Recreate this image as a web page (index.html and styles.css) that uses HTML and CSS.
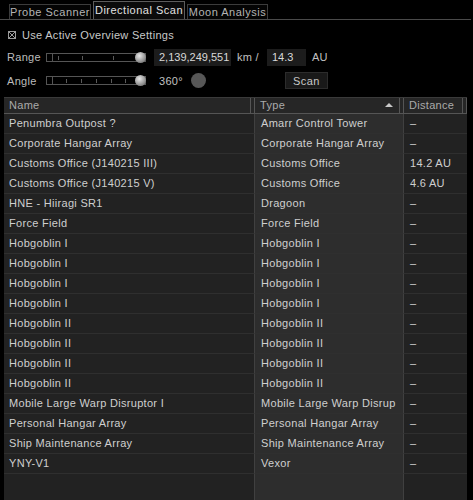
FILE: index.html
```html
<!DOCTYPE html>
<html>
<head>
<meta charset="utf-8">
<link rel="stylesheet" href="styles.css">
</head>
<body>
<div class="tabs">
  <div class="tab t1">Probe Scanner</div>
  <div class="tab active t2">Directional Scan</div>
  <div class="tab t3">Moon Analysis</div>
</div>
<div class="check-row">
  <span class="checkbox"></span>
  <span>Use Active Overview Settings</span>
</div>
<div class="ctrl-row range-row">
  <span class="lbl">Range</span>
  <div class="slider">
    <span class="seg"></span>
    <span class="tick" style="left:11px"></span>
    <span class="tick" style="left:35px"></span>
    <span class="tick" style="left:66px"></span>
    <span class="knob"></span>
  </div>
  <div class="field km">2,139,249,551</div>
  <span class="unit">km /</span>
  <div class="field au">14.3</div>
  <span class="unit">AU</span>
</div>
<div class="ctrl-row angle-row">
  <span class="lbl">Angle</span>
  <div class="slider">
    <span class="seg"></span>
    <span class="tick" style="left:19px"></span>
    <span class="tick" style="left:34px"></span>
    <span class="tick" style="left:49px"></span>
    <span class="tick" style="left:64px"></span>
    <span class="tick" style="left:78px"></span>
    <span class="knob"></span>
  </div>
  <span class="deg">360°</span>
  <span class="circle"></span>
  <button class="scan">Scan</button>
</div>
<div class="table">
  <div class="thead">
    <div class="th c-name">Name</div>
    <div class="th c-type">Type <span class="arrow"></span></div>
    <div class="th c-dist">Distance</div>
    <div class="th c-end"></div>
  </div>
  <div class="tbody">
    <div class="tr"><div class="td c-name">Penumbra Outpost ?</div><div class="td c-type">Amarr Control Tower</div><div class="td c-dist">–</div></div>
    <div class="tr"><div class="td c-name">Corporate Hangar Array</div><div class="td c-type">Corporate Hangar Array</div><div class="td c-dist">–</div></div>
    <div class="tr"><div class="td c-name">Customs Office (J140215 III)</div><div class="td c-type">Customs Office</div><div class="td c-dist">14.2 AU</div></div>
    <div class="tr"><div class="td c-name">Customs Office (J140215 V)</div><div class="td c-type">Customs Office</div><div class="td c-dist">4.6 AU</div></div>
    <div class="tr"><div class="td c-name">HNE - Hiiragi SR1</div><div class="td c-type">Dragoon</div><div class="td c-dist">–</div></div>
    <div class="tr"><div class="td c-name">Force Field</div><div class="td c-type">Force Field</div><div class="td c-dist">–</div></div>
    <div class="tr"><div class="td c-name">Hobgoblin I</div><div class="td c-type">Hobgoblin I</div><div class="td c-dist">–</div></div>
    <div class="tr"><div class="td c-name">Hobgoblin I</div><div class="td c-type">Hobgoblin I</div><div class="td c-dist">–</div></div>
    <div class="tr"><div class="td c-name">Hobgoblin I</div><div class="td c-type">Hobgoblin I</div><div class="td c-dist">–</div></div>
    <div class="tr"><div class="td c-name">Hobgoblin I</div><div class="td c-type">Hobgoblin I</div><div class="td c-dist">–</div></div>
    <div class="tr"><div class="td c-name">Hobgoblin II</div><div class="td c-type">Hobgoblin II</div><div class="td c-dist">–</div></div>
    <div class="tr"><div class="td c-name">Hobgoblin II</div><div class="td c-type">Hobgoblin II</div><div class="td c-dist">–</div></div>
    <div class="tr"><div class="td c-name">Hobgoblin II</div><div class="td c-type">Hobgoblin II</div><div class="td c-dist">–</div></div>
    <div class="tr"><div class="td c-name">Hobgoblin II</div><div class="td c-type">Hobgoblin II</div><div class="td c-dist">–</div></div>
    <div class="tr"><div class="td c-name">Mobile Large Warp Disruptor I</div><div class="td c-type">Mobile Large Warp Disrup</div><div class="td c-dist">–</div></div>
    <div class="tr"><div class="td c-name">Personal Hangar Array</div><div class="td c-type">Personal Hangar Array</div><div class="td c-dist">–</div></div>
    <div class="tr"><div class="td c-name">Ship Maintenance Array</div><div class="td c-type">Ship Maintenance Array</div><div class="td c-dist">–</div></div>
    <div class="tr"><div class="td c-name">YNY-V1</div><div class="td c-type">Vexor</div><div class="td c-dist">–</div></div>
    <div class="tr filler"><div class="td c-name"></div><div class="td c-type"></div><div class="td c-dist"></div></div>
  </div>
</div>
</body>
</html>
```

FILE: styles.css
```css
* { box-sizing: border-box; }
html, body {
  margin: 0;
  padding: 0;
  background: #000;
  width: 473px;
  height: 500px;
  overflow: hidden;
}
body {
  font-family: "Liberation Sans", Arial, sans-serif;
  font-size: 11px;
  letter-spacing: 0.3px;
  color: #c8c8c8;
}

/* tabs */
.tabs {
  display: flex;
  align-items: flex-end;
  gap: 2px;
  height: 20px;
  width: 471px;
  padding-left: 9px;
  border-bottom: 1px solid #4a4a4a;
}
.tab {
  height: 15px;
  line-height: 14px;
  border: 1px solid #3c3c3c;
  border-bottom: none;
  color: #b4b4b4;
  font-size: 11px;
  letter-spacing: 0.5px;
  white-space: nowrap;
  text-align: center;
  background: #040404;
}
.tab.active {
  height: 18px;
  line-height: 17px;
  border-color: #5c5c5c;
  color: #e0e0e0;
  background: #0b0b0b;
}
.t1 { width: 82px; }
.t2 { width: 92px; }
.t3 { width: 81px; }

/* checkbox row */
.check-row {
  display: flex;
  align-items: center;
  gap: 6px;
  height: 14px;
  margin-top: 8px;
  padding-left: 8px;
  color: #c8c8c8;
  white-space: nowrap;
}
.checkbox {
  width: 8px;
  height: 8px;
  border: 1px solid #9a9a9a;
  background:
    linear-gradient(45deg, transparent 42%, #9a9a9a 42%, #9a9a9a 58%, transparent 58%),
    linear-gradient(-45deg, transparent 42%, #9a9a9a 42%, #9a9a9a 58%, transparent 58%);
}

/* control rows */
.ctrl-row {
  display: flex;
  align-items: center;
  padding-left: 7px;
  white-space: nowrap;
}
.range-row { height: 18px; margin-top: 6px; }
.angle-row { height: 17px; margin-top: 6px; }
.lbl { width: 39px; color: #bcbcbc; }
.slider {
  position: relative;
  width: 100px;
  height: 9px;
  border: 1px solid #555;
}
.seg {
  position: absolute;
  left: 5px;
  top: 0;
  bottom: 0;
  border-left: 1px solid #555;
}
.tick {
  position: absolute;
  top: 2px;
  height: 4px;
  border-left: 1px solid #5a5a5a;
}
.knob {
  position: absolute;
  left: 88px;
  top: -2px;
  width: 11px;
  height: 11px;
  border-radius: 50%;
  background: radial-gradient(circle at 40% 35%, #e8e8e8 0%, #a8a8a8 45%, #5a5a5a 100%);
}
.field {
  height: 17px;
  line-height: 17px;
  background: #1c1c1c;
  color: #d8d8d8;
  font-size: 11px;
  letter-spacing: 0;
  padding-left: 5px;
  overflow: hidden;
}
.km { width: 77px; margin-left: 8px; }
.au { width: 39px; margin-left: 8px; }
.unit { margin-left: 6px; color: #c0c0c0; }
.deg { margin-left: 13px; color: #c0c0c0; }
.circle {
  width: 15px;
  height: 15px;
  border-radius: 50%;
  background: #575757;
  margin-left: 8px;
}
.scan {
  margin-left: 79px;
  width: 43px;
  height: 17px;
  background: #191919;
  border: 1px solid #2c2c2c;
  color: #c8c8c8;
  font-family: inherit;
  font-size: 11px;
  letter-spacing: 0.4px;
  padding: 0;
}

/* table */
.table {
  margin-top: 8px;
  margin-left: 4px;
  width: 463px;
}
.thead {
  display: flex;
  height: 17px;
  background: #262626;
  border-top: 1px solid #3a3a3a;
  border-bottom: 1px solid #555;
}
.th {
  line-height: 15px;
  color: #aaaaaa;
  padding-left: 5px;
  border-right: 1px solid #555;
  white-space: nowrap;
}
.thead .c-name { width: 247px; margin-right: 3px; }
.thead .c-type {
  width: 146px;
  margin-right: 3px;
  border-left: 1px solid #555;
  position: relative;
}
.thead .c-dist { width: 60px; border-left: 1px solid #555; }
.thead .c-end { width: 4px; padding: 0; border-right: 1px solid #555; }
.arrow {
  position: absolute;
  right: 6px;
  top: 5px;
  width: 0;
  height: 0;
  border-left: 4px solid transparent;
  border-right: 4px solid transparent;
  border-bottom: 4px solid #c8c8c8;
}
.tbody { display: flex; flex-direction: column; }
.tr {
  display: flex;
  height: 20px;
}
.td {
  line-height: 19px;
  border-bottom: 1px solid #2f2f2f;
  white-space: nowrap;
  overflow: hidden;
  padding-left: 5px;
  color: #cfcfcf;
}
.tbody .c-name { width: 250px; background: #222; }
.tbody .c-type { width: 149px; background: #2d2d2d; border-left: 1px solid #404040; padding-left: 6px; }
.tbody .c-dist { width: 64px; background: #222; border-left: 1px solid #404040; padding-left: 6px; }
.filler { height: 40px; }
.filler .td { border-bottom: none; }
```
